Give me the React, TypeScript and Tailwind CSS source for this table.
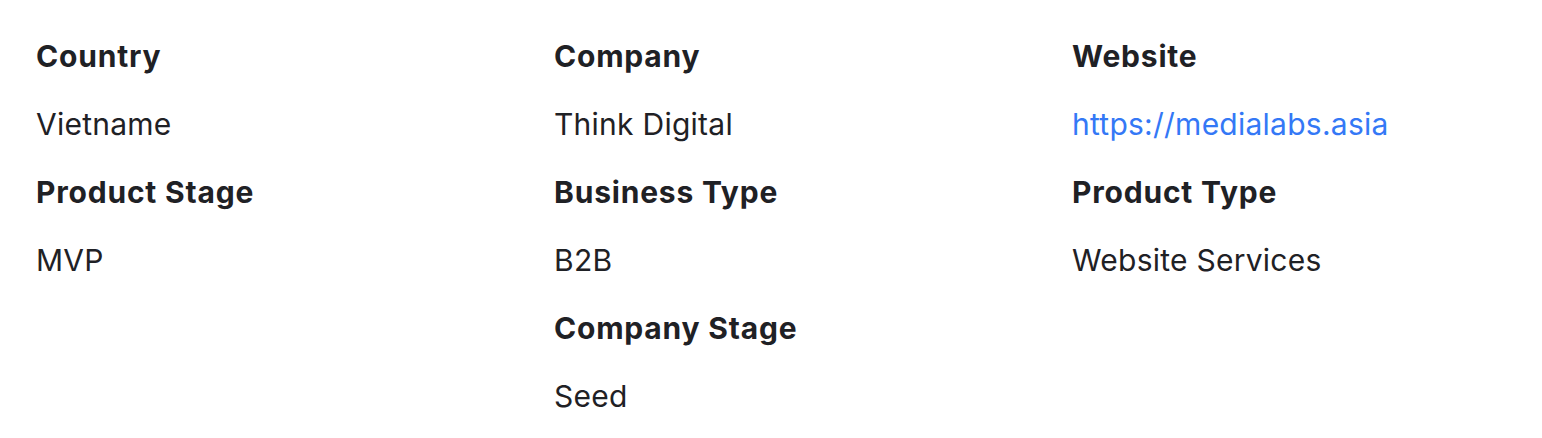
import React from "react";

const cols: { label: string; value: string; link?: boolean }[][] = [
  [
    { label: "Country", value: "Vietname" },
    { label: "Product Stage", value: "MVP" },
  ],
  [
    { label: "Company", value: "Think Digital" },
    { label: "Business Type", value: "B2B" },
    { label: "Company Stage", value: "Seed" },
  ],
  [
    { label: "Website", value: "https://medialabs.asia", link: true },
    { label: "Product Type", value: "Website Services" },
  ],
];

export default function App() {
  return (
    <div
      className="w-[1542px] h-[438px] bg-white text-[#1f2125] pl-[36px] pt-[39px] grid grid-cols-[518px_518px_1fr]"
      style={{ fontFamily: "Inter, 'Noto Sans', sans-serif" }}
    >
      {cols.map((col, i) => (
        <div key={i} className="flex flex-col">
          {col.map((it) => (
            <div key={it.label} className="flex flex-col">
              <div className="text-[30px] leading-[34px] font-bold tracking-[0.8px] h-[68px]">{it.label}</div>
              <div className="text-[30px] leading-[34px] tracking-[0.25px] h-[68px]">
                {it.link ? <a className="text-[#3478f6]">{it.value}</a> : it.value}
              </div>
            </div>
          ))}
        </div>
      ))}
    </div>
  );
}
